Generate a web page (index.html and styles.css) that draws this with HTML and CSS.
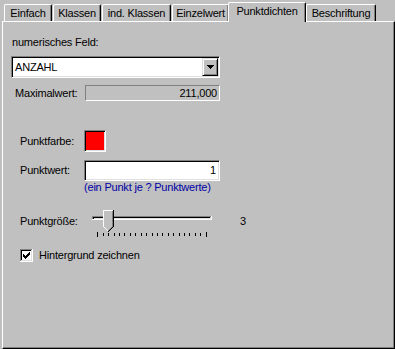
FILE: index.html
```html
<!DOCTYPE html>
<html>
<head>
<meta charset="utf-8">
<link rel="stylesheet" href="styles.css">
</head>
<body>
<div class="tabs">
  <div class="tab t-einfach">Einfach</div>
  <div class="tab t-klassen">Klassen</div>
  <div class="tab t-ind">ind. Klassen</div>
  <div class="tab t-einzel">Einzelwert</div>
  <div class="tab active t-punkt">Punktdichten</div>
  <div class="tab t-beschr">Beschriftung</div>
</div>
<div class="panel">
  <div class="label-top">numerisches Feld:</div>
  <div class="combo">
    <span class="combo-text">ANZAHL</span>
    <span class="combo-btn"><svg width="7" height="4" viewBox="0 0 7 4" shape-rendering="crispEdges"><path fill="#000" d="M0 0h7v1h-1v1h-1v1h-1v1h-1v-1h-1v-1h-1v-1h-1z"/></svg></span>
  </div>
  <div class="row row-max">
    <span class="lbl lbl-max">Maximalwert:</span>
    <span class="readonly">211,000</span>
  </div>
  <div class="row row-color">
    <span class="lbl">Punktfarbe:</span>
    <span class="swatch"></span>
  </div>
  <div class="row row-value">
    <span class="lbl">Punktwert:</span>
    <span class="input">1</span>
  </div>
  <div class="hint">(ein Punkt je ? Punktwerte)</div>
  <div class="row row-slider">
    <span class="lbl lbl-slider">Punktgröße:</span>
    <svg class="slider" width="124" height="29" viewBox="0 0 124 29" shape-rendering="crispEdges">
      <path fill="#808080" d="M0 7h119v1H1v3H0z"/>
      <path fill="#000" d="M1 8h117v1H2v1H1z"/>
      <path fill="#dfdfdf" d="M2 9h117v1H2z"/>
      <path fill="#fff" d="M119 7h1v4H0v-1h119z"/>
      <path fill="#c0c0c0" d="M12 2h8v16h-8z M13 18h6v1h-6z M14 19h4v1h-4z M15 20h2v1h-2z"/>
      <path fill="#fff" d="M11 1h10v1H12v16h-1z M12 18h1v1h-1z M13 19h1v1h-1z M14 20h1v1h-1z M15 21h1v1h-1z"/>
      <path fill="#808080" d="M20 2h1v16h-1z M19 18h1v1h-1z M18 19h1v1h-1z M17 20h1v1h-1z M16 21h1v1h-1z"/>
      <path fill="#000" d="M21 1h1v17h-1z M20 18h1v1h-1z M19 19h1v1h-1z M18 20h1v1h-1z M17 21h1v1h-1z M16 22h1v1h-1z"/>
      <path fill="#000" d="M5 23h1v5h-1z M11 24h1v3h-1z M16 24h1v3h-1z M22 24h1v3h-1z M27 24h1v3h-1z M32 24h1v3h-1z M38 24h1v3h-1z M43 24h1v3h-1z M49 24h1v3h-1z M54 24h1v3h-1z M60 24h1v3h-1z M65 24h1v3h-1z M70 24h1v3h-1z M76 24h1v3h-1z M81 24h1v3h-1z M87 24h1v3h-1z M92 24h1v3h-1z M97 24h1v3h-1z M103 24h1v3h-1z M108 24h1v3h-1z M114 23h1v5h-1z"/>
    </svg>
    <span class="slider-val">3</span>
  </div>
  <div class="row row-check">
    <svg class="check" width="13" height="13" viewBox="0 0 13 13" shape-rendering="crispEdges">
      <rect width="13" height="13" fill="#fff"/>
      <path fill="#808080" d="M0 0h12v1H1v11H0z"/>
      <path fill="#000" d="M1 1h10v1H2v9H1z"/>
      <path fill="#dfdfdf" d="M11 1h1v11H1v-1h10z"/>
      <path fill="#fff" d="M12 0h1v13H0v-1h12z"/>
      <path fill="#000" d="M3 5h1v3h-1z M4 6h1v3h-1z M5 7h1v3h-1z M6 6h1v3h-1z M7 5h1v3h-1z M8 4h1v3h-1z M9 3h1v3h-1z"/>
    </svg>
    <span class="check-label">Hintergrund zeichnen</span>
  </div>
</div>
</body>
</html>
```
FILE: styles.css
```css
html, body {
  margin: 0;
  padding: 0;
}
body {
  width: 395px;
  height: 349px;
  overflow: hidden;
  background: #c0c0c0;
  font-family: "Liberation Sans", Arial, sans-serif;
  font-size: 11px;
  letter-spacing: -0.2px;
  color: #000;
}
.tabs {
  display: flex;
  align-items: flex-end;
  height: 19px;
  padding: 2px 0 0 4px;
}
.tab {
  box-sizing: border-box;
  flex: none;
  height: 17px;
  border-top: 1px solid #fff;
  border-left: 1px solid #fff;
  border-right: 1px solid #000;
  box-shadow: inset -1px 0 #808080;
  border-radius: 2px 2px 0 0;
  line-height: 16px;
  text-align: center;
  white-space: nowrap;
  margin-right: 1px;
  background: #c0c0c0;
}
.tab.active {
  height: 20px;
  padding-bottom: 3px;
  margin-bottom: -1px;
  margin-left: -2px;
  margin-right: 0;
  z-index: 1;
}
.t-einfach { width: 48px; }
.t-klassen { width: 48px; }
.t-ind { width: 69px; }
.t-einzel { width: 57px; }
.t-punkt { width: 78px; }
.t-beschr { width: 70px; }

.panel {
  box-sizing: border-box;
  margin-left: 2px;
  width: 393px;
  height: 328px;
  border: 1px solid;
  border-color: #fff #000 #000 #fff;
  box-shadow: inset -1px -1px #808080;
  padding: 14px 0 0 8px;
}
.label-top {
  line-height: 13px;
  padding-left: 1px;
}
.combo {
  box-sizing: border-box;
  margin-top: 7px;
  width: 209px;
  height: 22px;
  display: flex;
  border: 1px solid;
  border-color: #808080 #fff #fff #808080;
  box-shadow: inset 1px 1px #000, inset -1px -1px #dfdfdf;
  padding: 1px;
  background: #fff;
}
.combo-text {
  flex: 1;
  line-height: 18px;
  padding-left: 2px;
}
.combo-btn {
  box-sizing: border-box;
  width: 16px;
  height: 18px;
  flex: none;
  display: flex;
  align-items: center;
  justify-content: center;
  border: 1px solid;
  border-color: #dfdfdf #000 #000 #dfdfdf;
  box-shadow: inset 1px 1px #fff, inset -1px -1px #808080;
  background: #c0c0c0;
  padding-left: 1px;
}
.row {
  display: flex;
  align-items: center;
}
.lbl {
  box-sizing: border-box;
  flex: none;
  width: 73px;
  padding-left: 9px;
  line-height: 13px;
}
.row-max {
  margin-top: 7px;
  height: 16px;
}
.lbl-max {
  width: 74px;
  padding-left: 4px;
}
.readonly {
  box-sizing: border-box;
  width: 135px;
  height: 16px;
  border: 1px solid;
  border-color: #808080 #fff #fff #808080;
  text-align: right;
  padding-right: 2px;
  line-height: 14px;
}
.row-color {
  margin-top: 29px;
  height: 22px;
}
.swatch {
  box-sizing: border-box;
  width: 22px;
  height: 22px;
  border: 1px solid;
  border-color: #808080 #fff #fff #808080;
  box-shadow: inset 1px 1px #000, inset -1px -1px #dfdfdf;
  background: #ff0000;
}
.row-value {
  margin-top: 8px;
  height: 21px;
}
.input {
  box-sizing: border-box;
  width: 136px;
  height: 21px;
  border: 1px solid;
  border-color: #808080 #fff #fff #808080;
  box-shadow: inset 1px 1px #000, inset -1px -1px #dfdfdf;
  background: #fff;
  text-align: right;
  padding-right: 3px;
  line-height: 19px;
}
.hint {
  color: #0000a8;
  line-height: 13px;
  padding-left: 73px;
}
.row-slider {
  margin-top: 15px;
  height: 29px;
  align-items: flex-start;
}
.lbl-slider {
  width: 81px;
  margin-top: 6px;
}
.slider {
  display: block;
  flex: none;
}
.slider-val {
  margin-left: 24px;
  margin-top: 6px;
  line-height: 13px;
}
.row-check {
  margin-top: 11px;
  height: 13px;
}
.check {
  display: block;
  flex: none;
  margin-left: 9px;
}
.check-label {
  margin-left: 6px;
  line-height: 13px;
}
```
